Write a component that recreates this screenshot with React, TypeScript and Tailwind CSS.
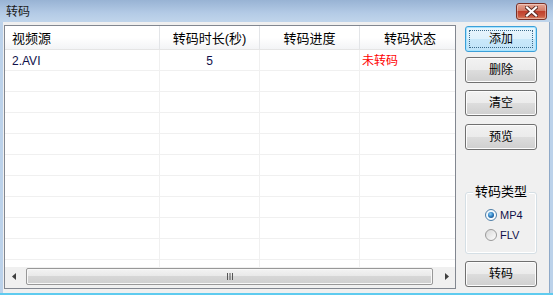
import React from "react";

const btnNormal =
  "relative h-[26px] w-[72px] rounded-[3px] border border-[#707070] bg-[linear-gradient(#f2f2f2,#ebebeb_50%,#dddddd_50%,#cfcfcf)] shadow-[inset_0_0_0_1px_#fcfcfc] flex items-center justify-center text-[12px] text-black leading-none";

function Radio({ checked }: { checked: boolean }) {
  return (
    <svg width="12" height="12" viewBox="0 0 12 12">
      <defs>
        <linearGradient id={checked ? "rc" : "ru"} x1="0" y1="0" x2="1" y2="1">
          <stop offset="0" stopColor={checked ? "#e9f4fb" : "#d6d6d6"} />
          <stop offset="1" stopColor="#ffffff" />
        </linearGradient>
        <radialGradient id="dot" cx="0.4" cy="0.35" r="0.7">
          <stop offset="0" stopColor="#8fd0f5" />
          <stop offset="0.6" stopColor="#2c7fc4" />
          <stop offset="1" stopColor="#1a4f87" />
        </radialGradient>
      </defs>
      <circle cx="6" cy="6" r="5.5" fill={`url(#${checked ? "rc" : "ru"})`} stroke={checked ? "#4f7ea6" : "#9a9a9a"} strokeWidth="1" />
      {checked && <circle cx="6" cy="6" r="3" fill="url(#dot)" />}
    </svg>
  );
}

export default function App() {
  const rows = Array.from({ length: 11 });
  return (
    <div className="w-[553px] h-[295px] flex flex-col bg-[#bcd2ea] font-[family-name:'Liberation_Sans','Noto_Sans_CJK_SC',sans-serif] overflow-hidden select-none">
      {/* Title bar */}
      <div className="h-[22px] shrink-0 flex items-center justify-between pl-[6px] pr-[6px] bg-[linear-gradient(#98b3d4,#b4cbe6_60%,#c0d5eb)]">
        <span className="text-[12px] leading-none text-[#1a1a1a] mt-[1px]">转码</span>
        <div className="w-[31px] h-[17px] mt-[1px] rounded-[3px] border border-[#7a3127] bg-[linear-gradient(#e6a796,#d27a66_45%,#c0402c_50%,#c9573f_80%,#dc8a6a)] shadow-[inset_0_0_0_1px_rgba(255,255,255,0.35)] flex items-center justify-center">
          <svg width="13" height="11" viewBox="0 0 13 11">
            <path d="M2 1.5 L11 9.5 M11 1.5 L2 9.5" stroke="#5a2a22" strokeWidth="4" strokeLinecap="square" />
            <path d="M2 1.5 L11 9.5 M11 1.5 L2 9.5" stroke="#ffffff" strokeWidth="2.2" strokeLinecap="square" />
          </svg>
        </div>
      </div>

      {/* Client */}
      <div className="flex-1 flex ml-[3px] mr-[3px] mb-[2px] bg-[#f0f0f0] pt-[3px] pl-[1px] pb-[4px] border-r border-[#8fa9c8]">
        {/* List view */}
        <div className="w-[452px] h-[264px] shrink-0 border border-[#828790] bg-white flex flex-col overflow-hidden">
          {/* Header */}
          <div className="h-[24px] shrink-0 flex bg-[linear-gradient(#ffffff,#ffffff_50%,#f3f4f6)] border-b border-[#e5e5e5] text-[13px] text-black leading-none">
            <div className="w-[155px] shrink-0 flex items-center pl-[7px] pt-[2px] border-r border-[#e3e5e8]">视频源</div>
            <div className="w-[100px] shrink-0 flex items-center justify-center pt-[2px] border-r border-[#e3e5e8]">转码时长(秒)</div>
            <div className="w-[100px] shrink-0 flex items-center justify-center pt-[2px] border-r border-[#e3e5e8]">转码进度</div>
            <div className="w-[100px] shrink-0 flex items-center justify-center pt-[2px]">转码状态</div>
          </div>
          {/* Body */}
          <div className="flex-1 overflow-hidden">
            {rows.map((_, i) => (
              <div key={i} className="h-[21px] flex border-b border-[#f0f0f0] text-[12px] leading-none">
                <div className="w-[155px] shrink-0 flex items-center pl-[7px] pt-[2px] border-r border-[#f0f0f0] text-[#10104a]">
                  {i === 0 ? "2.AVI" : ""}
                </div>
                <div className="w-[100px] shrink-0 flex items-center justify-center pt-[2px] border-r border-[#f0f0f0] text-[#10104a]">
                  {i === 0 ? "5" : ""}
                </div>
                <div className="w-[100px] shrink-0 border-r border-[#f0f0f0]" />
                <div className="w-[100px] shrink-0 flex items-center pl-[2px] pt-[2px] text-[#ff0000]">
                  {i === 0 ? "未转码" : ""}
                </div>
              </div>
            ))}
          </div>
          {/* Horizontal scrollbar */}
          <div className="h-[21px] shrink-0 bg-[#f0f0f0] pt-[1px]">
            <div className="h-[17px] flex items-center">
              <div className="w-[17px] h-[17px] shrink-0 flex items-center justify-center">
                <svg width="4" height="7" viewBox="0 0 4 7">
                  <path d="M4 0 L0 3.5 L4 7 Z" fill="#404040" />
                </svg>
              </div>
              <div className="flex-1 h-[17px] pl-[4px] pr-[5px]">
                <div className="h-full rounded-[2px] border border-[#989898] bg-[linear-gradient(#f3f3f3,#e8e8e8_50%,#d6d6d6_50%,#cfcfcf)] shadow-[inset_0_0_0_1px_#f8f8f8] flex items-center justify-center">
                  <svg width="8" height="7" viewBox="0 0 8 7">
                    <path d="M1.5 0 V7 M4 0 V7 M6.5 0 V7" stroke="#555" strokeWidth="1" />
                  </svg>
                </div>
              </div>
              <div className="w-[17px] h-[17px] shrink-0 flex items-center justify-center">
                <svg width="4" height="7" viewBox="0 0 4 7">
                  <path d="M0 0 L4 3.5 L0 7 Z" fill="#404040" />
                </svg>
              </div>
            </div>
          </div>
        </div>

        {/* Right panel */}
        <div className="ml-[9px] w-[72px] shrink-0 flex flex-col pt-[1px]">
          <div className="relative h-[26px] w-[72px] rounded-[3px] border border-[#3c9fd8] bg-[linear-gradient(#eaf6fd,#dff1fc_50%,#c9e8fa_50%,#bfe3f8)] shadow-[inset_0_0_0_1px_#a6e4ff] flex items-center justify-center text-[12px] text-black leading-none">
            <div className="absolute inset-[3px] border border-dotted border-[#3a6a8a]" />
            添加
          </div>
          <div className={`${btnNormal} mt-[5px]`}>删除</div>
          <div className={`${btnNormal} mt-[7px]`}>清空</div>
          <div className={`${btnNormal} mt-[8px]`}>预览</div>

          <div className="relative mt-[42px] h-[62px] w-[72px] rounded-[3px] border border-[#d5dfe5] shadow-[inset_0_0_0_1px_#fff]">
            <div className="absolute -top-[9px] left-0 right-0 flex justify-center">
              <span className="bg-[#f0f0f0] px-[2px] text-[13px] leading-[16px] text-black">转码类型</span>
            </div>
            <div className="flex flex-col pl-[19px] pt-[16px] gap-[8px] text-[11px] leading-none text-[#10104a]">
              <div className="flex items-center gap-[3px] h-[12px]">
                <Radio checked />
                <span>MP4</span>
              </div>
              <div className="flex items-center gap-[3px] h-[12px]">
                <Radio checked={false} />
                <span>FLV</span>
              </div>
            </div>
          </div>

          <div className={`${btnNormal} mt-[7px]`}>转码</div>
        </div>
      </div>
      <div className="h-[2px] shrink-0 bg-[#5fcbef] -mt-[2px]" />
    </div>
  );
}
